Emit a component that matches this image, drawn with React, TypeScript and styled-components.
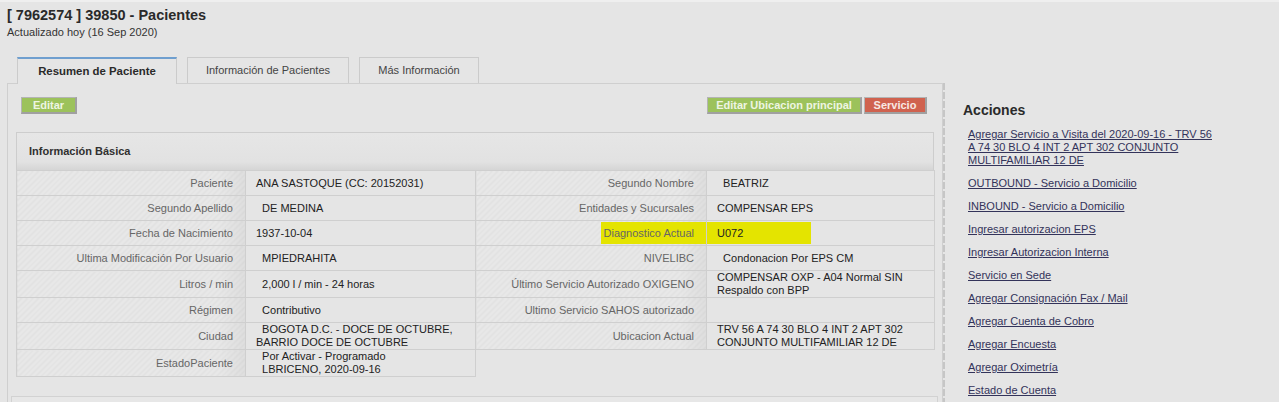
import React from "react";
import styled, { createGlobalStyle } from "styled-components";

interface Field {
    label: string;
    value: string;
    mark?: boolean;
}

const NB = "\u00a0\u00a0";

const rows: Field[][] = [
    [
        { label: "Paciente", value: "ANA SASTOQUE (CC: 20152031)" },
        { label: "Segundo Nombre", value: NB + "BEATRIZ" },
    ],
    [
        { label: "Segundo Apellido", value: NB + "DE MEDINA" },
        { label: "Entidades y Sucursales", value: "COMPENSAR EPS" },
    ],
    [
        { label: "Fecha de Nacimiento", value: "1937-10-04" },
        { label: "Diagnostico Actual", value: "U072", mark: true },
    ],
    [
        { label: "Ultima Modificación Por Usuario", value: NB + "MPIEDRAHITA" },
        { label: "NIVELIBC", value: NB + "Condonacion Por EPS CM" },
    ],
    [
        { label: "Litros / min", value: NB + "2,000 l / min - 24 horas" },
        { label: "Último Servicio Autorizado OXIGENO", value: "COMPENSAR OXP - A04 Normal SIN Respaldo con BPP" },
    ],
    [
        { label: "Régimen", value: NB + "Contributivo" },
        { label: "Ultimo Servicio SAHOS autorizado", value: "" },
    ],
    [
        { label: "Ciudad", value: NB + "BOGOTA D.C. - DOCE DE OCTUBRE, BARRIO DOCE DE OCTUBRE" },
        { label: "Ubicacion Actual", value: "TRV 56 A 74 30 BLO 4 INT 2 APT 302 CONJUNTO MULTIFAMILIAR 12 DE" },
    ],
    [{ label: "EstadoPaciente", value: NB + "Por Activar - Programado\n" + NB + "LBRICENO, 2020-09-16" }],
];

const actions = [
    "Agregar Servicio a Visita del 2020-09-16 - TRV 56 A 74 30 BLO 4 INT 2 APT 302 CONJUNTO MULTIFAMILIAR 12 DE",
    "OUTBOUND - Servicio a Domicilio",
    "INBOUND - Servicio a Domicilio",
    "Ingresar autorizacion EPS",
    "Ingresar Autorizacion Interna",
    "Servicio en Sede",
    "Agregar Consignación Fax / Mail",
    "Agregar Cuenta de Cobro",
    "Agregar Encuesta",
    "Agregar Oximetría",
    "Estado de Cuenta",
];

const tabs = [
    { title: "Resumen de Paciente", width: 160 },
    { title: "Información de Pacientes", width: 162 },
    { title: "Más Información", width: 120 },
];

const App: React.FC = () => {
    return (
        <>
            <GlobalStyle />
            <Page>
                <Title>[ 7962574 ] 39850 - Pacientes</Title>
                <Updated>Actualizado hoy (16 Sep 2020)</Updated>
                <Tabs>
                    {tabs.map((t, i) => (
                        <Tab key={t.title} active={i === 0} width={t.width}>
                            {t.title}
                        </Tab>
                    ))}
                </Tabs>
                <Layout>
                    <Panel>
                        <ButtonRow>
                            <Button tone="green" width={56}>
                                Editar
                            </Button>
                            <ButtonGroup>
                                <Button tone="green" width={155}>
                                    Editar Ubicacion principal
                                </Button>
                                <Button tone="red" width={63}>
                                    Servicio
                                </Button>
                            </ButtonGroup>
                        </ButtonRow>
                        <InfoBox>
                            <BoxHeader>Información Básica</BoxHeader>
                            <InfoTable>
                                <colgroup>
                                    <col style={{ width: 229 }} />
                                    <col style={{ width: 230 }} />
                                    <col style={{ width: 231 }} />
                                    <col style={{ width: 228 }} />
                                </colgroup>
                                <tbody>
                                    {rows.map((row, i) => (
                                        <tr key={i}>
                                            {row.map((f) => (
                                                <React.Fragment key={f.label}>
                                                    <LabelCell>
                                                        {f.mark ? <LabelMark>{f.label}</LabelMark> : f.label}
                                                    </LabelCell>
                                                    <ValueCell>
                                                        {f.mark ? <ValueMark>{f.value}</ValueMark> : f.value}
                                                    </ValueCell>
                                                </React.Fragment>
                                            ))}
                                        </tr>
                                    ))}
                                </tbody>
                            </InfoTable>
                        </InfoBox>
                        <NextBox />
                    </Panel>
                    <Sidebar>
                        <SideTitle>Acciones</SideTitle>
                        <ActionList>
                            {actions.map((a) => (
                                <li key={a}>
                                    <ActionLink href="#">{a}</ActionLink>
                                </li>
                            ))}
                        </ActionList>
                    </Sidebar>
                </Layout>
            </Page>
        </>
    );
};

const GlobalStyle = createGlobalStyle`
    html, body {
        margin: 0;
        padding: 0;
        background: #e5e5e5;
    }
    body {
        font-family: "Liberation Sans", Arial, sans-serif;
        font-size: 11px;
        color: #222;
    }
`;

const Page = styled.div`
    box-sizing: border-box;
    height: 402px;
    overflow: hidden;
    border-top: 2px solid #efefef;
    padding: 4px 0 0 7px;
`;

const Title = styled.h1`
    margin: 0;
    font-size: 14.5px;
    line-height: 18px;
    font-weight: bold;
    color: #2a2a2a;
`;

const Updated = styled.div`
    margin-top: 2px;
    line-height: 13px;
    color: #333;
`;

const Tabs = styled.div`
    display: flex;
    gap: 10px;
    margin-top: 18px;
    padding-left: 10px;
    height: 26px;
`;

const Tab = styled.div<{ active?: boolean; width: number }>`
    position: relative;
    z-index: 1;
    box-sizing: border-box;
    width: ${({ width }) => width}px;
    height: ${({ active }) => (active ? "27px" : "26px")};
    border: 1px solid #cbcbcb;
    border-bottom: 0;
    border-top: ${({ active }) => (active ? "2px solid #6f9fcf" : "1px solid #cbcbcb")};
    background: #e5e5e5;
    text-align: center;
    line-height: 25px;
    font-size: ${({ active }) => (active ? "11.4px" : "11px")};
    color: ${({ active }) => (active ? "#2a2a2a" : "#444")};
    font-weight: ${({ active }) => (active ? "bold" : "normal")};
    white-space: nowrap;
`;

const Layout = styled.div`
    display: flex;
    align-items: stretch;
`;

const Panel = styled.div`
    box-sizing: border-box;
    width: 936px;
    flex: none;
    border: 1px solid #cfcfcf;
    border-bottom: 0;
    padding-top: 13px;
`;

const ButtonRow = styled.div`
    display: flex;
    justify-content: space-between;
    padding: 0 15px 0 13px;
`;

const ButtonGroup = styled.div`
    display: flex;
    gap: 2px;
`;

const Button = styled.button<{ tone: "green" | "red"; width?: number }>`
    box-sizing: border-box;
    height: 17px;
    ${({ width }) => (width ? `width: ${width}px;` : "")}
    padding: 0;
    margin: 0;
    border-style: solid;
    border-width: 1px 2px 2px 1px;
    border-color: #b4b4b4 #a0a0a0 #a0a0a0 #b4b4b4;
    background: ${({ tone }) => (tone === "green" ? "#9cc25b" : "#d0624f")};
    color: ${({ tone }) => (tone === "green" ? "#eef5e2" : "#f8e9e4")};
    font-family: "Liberation Sans", Arial, sans-serif;
    font-size: 11px;
    font-weight: bold;
    line-height: 14px;
    text-align: center;
    white-space: nowrap;
    cursor: pointer;
`;

const InfoBox = styled.div`
    margin: 18px 8px 0 8px;
`;

const BoxHeader = styled.div`
    box-sizing: border-box;
    height: 38px;
    border: 1px solid #cdcdcd;
    border-bottom: 0;
    padding-left: 12px;
    line-height: 37px;
    font-weight: bold;
    color: #303030;
    background: linear-gradient(#e6e6e6 0%, #e2e2e2 78%, #d5d5d5 100%);
`;

const InfoTable = styled.table`
    width: 918px;
    border-collapse: collapse;
    table-layout: fixed;

    td {
        border: 1px solid #cfcfcf;
        height: 24px;
        padding: 0 10px;
        line-height: 13px;
        vertical-align: middle;
    }
`;

const LabelCell = styled.td`
    text-align: right;
    padding-right: 12px !important;
    color: #666;
    background:
        linear-gradient(to right, rgba(0, 0, 0, 0) 88%, rgba(0, 0, 0, 0.045) 100%),
        repeating-linear-gradient(135deg, #e8e8e8 0 2px, #e2e2e2 2px 4px);
`;

const ValueCell = styled.td`
    color: #222;
    white-space: pre-line;
`;

const LabelMark = styled.span`
    display: inline-block;
    margin-right: -12px;
    padding: 0 12px 0 3px;
    line-height: 22px;
    background: #e4e400;
`;

const ValueMark = styled.span`
    display: inline-block;
    box-sizing: border-box;
    width: 104px;
    margin-left: -10px;
    padding-left: 10px;
    line-height: 22px;
    background: #e4e400;
`;

const NextBox = styled.div`
    margin: 19px 4px 0 3px;
    height: 40px;
    border: 1px solid #d2d2d2;
    background: #e7e7e7;
`;

const Sidebar = styled.aside`
    flex: 1;
    padding: 19px 0 0 20px;
    background: repeating-linear-gradient(to bottom, #c6c6c6 0 7px, transparent 7px 9px) left top / 2px 100%
        no-repeat;
`;

const SideTitle = styled.h2`
    margin: 0;
    font-size: 14px;
    line-height: 17px;
    font-weight: bold;
    color: #2a2a2a;
`;

const ActionList = styled.ul`
    list-style: none;
    margin: 9px 0 0;
    padding: 0 0 0 5px;
    width: 250px;
    display: flex;
    flex-direction: column;
    gap: 10px;

    li {
        line-height: 13px;
    }
`;

const ActionLink = styled.a`
    color: #33335a;
    text-decoration: underline;
`;

export default App;
